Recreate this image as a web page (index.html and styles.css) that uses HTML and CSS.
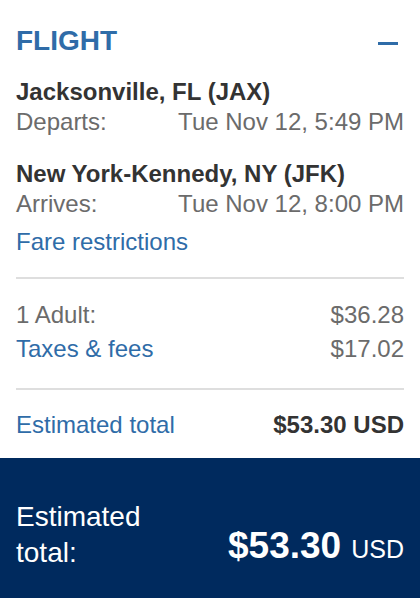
FILE: index.html
```html
<!DOCTYPE html>
<html lang="en">
<head>
<meta charset="utf-8">
<title>Flight summary</title>
<link rel="stylesheet" href="styles.css">
</head>
<body>
<div class="card">
  <div class="content">
    <div class="header">
      <h1 class="title">FLIGHT</h1>
      <span class="collapse" aria-label="Collapse"></span>
    </div>

    <div class="leg">
      <div class="city">Jacksonville, FL (JAX)</div>
      <div class="row muted">
        <span>Departs:</span>
        <span>Tue Nov 12, 5:49 PM</span>
      </div>
    </div>

    <div class="leg leg-second">
      <div class="city">New York-Kennedy, NY (JFK)</div>
      <div class="row muted">
        <span>Arrives:</span>
        <span>Tue Nov 12, 8:00 PM</span>
      </div>
    </div>

    <a class="link fare" href="#">Fare restrictions</a>

    <hr class="divider">

    <div class="prices">
      <div class="row muted">
        <span>1 Adult:</span>
        <span>$36.28</span>
      </div>
      <div class="row">
        <a class="link" href="#">Taxes &amp; fees</a>
        <span class="muted">$17.02</span>
      </div>
    </div>

    <hr class="divider divider-second">

    <div class="row total-row">
      <a class="link" href="#">Estimated total</a>
      <span class="strong">$53.30 USD</span>
    </div>
  </div>

  <div class="footer">
    <div class="footer-label">Estimated<br>total:</div>
    <div class="footer-price"><span class="amount">$53.30</span><span class="currency">USD</span></div>
  </div>
</div>
</body>
</html>
```

FILE: styles.css
```css
* {
  box-sizing: border-box;
}

html, body {
  margin: 0;
  padding: 0;
  background: #ffffff;
}

body {
  font-family: "Liberation Sans", Arial, sans-serif;
  font-size: 24px;
  line-height: 30px;
  color: #333333;
}

.card {
  width: 420px;
  min-height: 598px;
  display: flex;
  flex-direction: column;
}

.content {
  padding: 24px 16px 0 16px;
  display: flex;
  flex-direction: column;
}

.header {
  display: flex;
  justify-content: space-between;
  align-items: center;
  height: 34px;
}

.title {
  margin: 0;
  font-size: 28px;
  line-height: 34px;
  font-weight: bold;
  color: #2f6ca8;
}

.collapse {
  display: block;
  width: 20px;
  height: 3px;
  margin-top: 4px;
  margin-right: 6px;
  background: #2f6ca8;
}

.leg {
  margin-top: 19px;
}

.leg-second {
  margin-top: 22px;
}

.city {
  font-weight: bold;
  color: #333333;
}

.row {
  display: flex;
  justify-content: space-between;
  align-items: baseline;
}

.muted {
  color: #6b6b6b;
}

.link {
  color: #2f6ca8;
  text-decoration: none;
}

.fare {
  margin-top: 8px;
  align-self: flex-start;
}

.divider {
  margin: 20px 0 0 0;
  border: 0;
  height: 2px;
  background: #dedede;
}

.prices {
  margin-top: 21px;
  display: flex;
  flex-direction: column;
  gap: 4px;
}

.divider-second {
  margin-top: 24px;
}

.total-row {
  margin-top: 20px;
}

.strong {
  font-weight: bold;
  color: #333333;
}

.footer {
  margin-top: 18px;
  flex: 1;
  background: #002a5e;
  color: #ffffff;
  padding: 41px 16px 27px 16px;
  display: flex;
  justify-content: space-between;
  align-items: flex-end;
}

.footer-label {
  font-size: 28px;
  line-height: 36px;
}

.footer-price {
  line-height: 43px;
  white-space: nowrap;
}

.amount {
  font-size: 37px;
  font-weight: bold;
}

.currency {
  font-size: 25px;
  margin-left: 10px;
}
```
